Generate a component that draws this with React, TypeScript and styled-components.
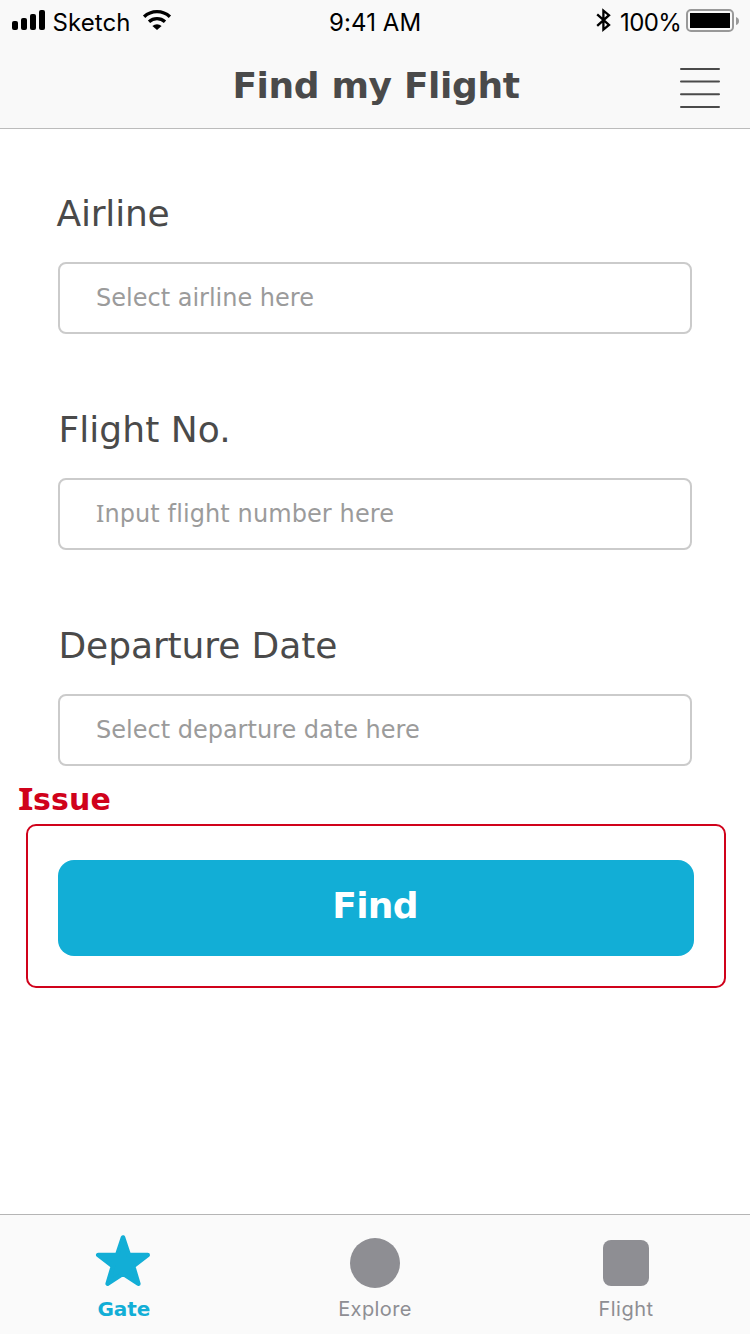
import React from 'react';
import styled, { createGlobalStyle } from 'styled-components';

const Global = createGlobalStyle`
  * { box-sizing: border-box; }
  body { margin: 0; background: #fff; }
`;

const verdana = `Verdana, 'DejaVu Sans', sans-serif`;
const system = `Inter, 'Liberation Sans', sans-serif`;

const Screen = styled.div`
  width: 750px;
  height: 1334px;
  display: flex;
  flex-direction: column;
  background: #fff;
  color: #4a4a4a;
  font-family: ${verdana};
  font-variant-ligatures: none;
  overflow: hidden;
`;

const Header = styled.header`
  height: 129px;
  background: #f9f9f9;
  border-bottom: 1px solid #bcbcbc;
`;

const StatusBar = styled.div`
  height: 40px;
  padding: 0 10px 0 12px;
  display: grid;
  grid-template-columns: 1fr auto 1fr;
  align-items: start;
  color: #000;
  font-family: ${system};
  font-size: 24px;
  line-height: 29px;
`;

const StatusGroup = styled.div<{ $end?: boolean }>`
  display: flex;
  align-items: flex-start;
  justify-content: ${(p) => (p.$end ? 'flex-end' : 'flex-start')};
`;

const StatusText = styled.span<{ $width: number; $spacing: number; $indent?: number }>`
  width: ${(p) => p.$width}px;
  padding-top: 8px;
  padding-left: ${(p) => p.$indent ?? 0}px;
  letter-spacing: ${(p) => p.$spacing}px;
  white-space: nowrap;
`;

const NavBar = styled.div`
  height: 88px;
  padding: 0 30px;
  display: grid;
  grid-template-columns: 40px 1fr 40px;
`;

const Title = styled.h1`
  grid-column: 2;
  margin: 0;
  padding: 25px 0 0 2px;
  text-align: center;
  font-size: 36px;
  line-height: 42px;
  font-weight: 700;
  letter-spacing: -0.36px;
`;

const MenuButton = styled.button`
  width: 40px;
  height: 40px;
  margin-top: 28px;
  padding: 0;
  border: 0;
  background: none;
  display: block;
  svg { display: block; }
`;

const Form = styled.main`
  flex: 1;
  padding: 64px 24px 0 26px;
`;

const Field = styled.label`
  display: block;
  height: 216px;
  padding: 0 34px 0 32px;
`;

const FieldLabel = styled.span<{ $shift: number; $spacing: number }>`
  display: block;
  height: 69px;
  margin-left: ${(p) => p.$shift}px;
  font-size: 36px;
  line-height: 42px;
  letter-spacing: ${(p) => p.$spacing}px;
`;

const FieldBox = styled.span<{ $spacing: number }>`
  display: block;
  height: 72px;
  padding: 20px 36px 0;
  border: 2px solid #cbcbcb;
  border-radius: 8px;
  color: #9b9b9b;
  font-size: 24px;
  line-height: 28px;
  letter-spacing: ${(p) => p.$spacing}px;
`;

const SerifCap = styled.span`
  font-family: 'Noto Sans', sans-serif;
  font-size: 1.02em;
  line-height: 1;
`;

const IssueTitle = styled.h2`
  margin: -59px 0 0 -8px;
  height: 42px;
  font-size: 30px;
  line-height: 35px;
  font-weight: 700;
  letter-spacing: 0.1px;
  color: #d0021b;
  ${SerifCap} {
    display: inline-block;
    transform: scaleX(1.3);
    transform-origin: left;
    margin-right: 3px;
  }
`;

const IssueFrame = styled.section`
  height: 164px;
  padding: 34px 30px;
  border: 2px solid #d0021b;
  border-radius: 10px;
`;

const FindButton = styled.button`
  display: flex;
  justify-content: center;
  align-items: flex-start;
  width: 636px;
  height: 96px;
  padding: 25px 2px 0 0;
  border: 0;
  border-radius: 16px;
  background: #12aed6;
  color: #fff;
  font: 700 36px/42px ${verdana};
  letter-spacing: -0.7px;
`;

const TabBar = styled.nav`
  height: 120px;
  display: grid;
  grid-template-columns: 246px 258px 244px;
  background: #fafafa;
  border-top: 1px solid #b5b5b5;
`;

const Tab = styled.a<{ $active?: boolean; $spacing: number }>`
  display: flex;
  flex-direction: column;
  align-items: center;
  color: ${(p) => (p.$active ? '#12aed6' : '#8e8e93')};
  font-family: ${(p) => (p.$active ? verdana : system)};
  font-weight: ${(p) => (p.$active ? 700 : 400)};
  font-size: 20px;
  line-height: 24px;
  letter-spacing: ${(p) => p.$spacing}px;
  svg { display: block; margin: 19px 0 7px; }
`;

const TabLabel = styled.span<{ $indent?: number }>`
  padding-left: ${(p) => p.$indent ?? 0}px;
`;

const Signal = () => (
  <svg width="34" height="32" viewBox="0 0 34 32">
    <rect x="0" y="21" width="6" height="9" rx="2" />
    <rect x="9" y="18" width="6" height="12" rx="2" />
    <rect x="18" y="14" width="6" height="16" rx="2" />
    <rect x="27" y="10" width="6" height="20" rx="2" />
  </svg>
);

const Wifi = () => (
  <svg width="30" height="32" viewBox="142 0 30 32">
    <g fill="none" stroke="#000" strokeWidth="3.4">
      <path d="M144.1 16.7a19 19 0 0 1 25.8 0" />
      <path d="M149 21.7a12 12 0 0 1 16 0" />
    </g>
    <path d="M152.4 25.9a7 7 0 0 1 9.2 0L157 30Z" />
  </svg>
);

const Bluetooth = () => (
  <svg width="24" height="34" viewBox="596 0 24 34">
    <path d="M597.2 14.4 609 25 603.4 29.6V10.6L609 15.2 597.2 25.8" fill="none" stroke="#000" strokeWidth="2.3" />
  </svg>
);

const Battery = () => (
  <svg width="54" height="34" viewBox="686 0 54 34">
    <rect x="687" y="10" width="46" height="21" rx="4" fill="none" stroke="#999" strokeWidth="2" />
    <rect x="690" y="13" width="40" height="15" />
    <path d="M736 17q3 1 3 4t-3 4Z" fill="#999" />
  </svg>
);

const fields = [
  { label: 'Airline', shift: -1.5, spacing: -0.2, hint: 'Select airline here', hintSpacing: 0 },
  { label: 'Flight No.', shift: 0.5, spacing: 0.05, hint: 'Input flight number here', hintSpacing: 0.1 },
  { label: 'Departure Date', shift: 0.5, spacing: -0.1, hint: 'Select departure date here', hintSpacing: 0 },
];

const Text = ({ children }: { children: string }) =>
  children.startsWith('I') ? (
    <>
      <SerifCap>I</SerifCap>
      {children.slice(1)}
    </>
  ) : (
    <>{children}</>
  );

export default function App() {
  return (
    <>
      <Global />
      <Screen>
        <Header>
          <StatusBar>
            <StatusGroup>
              <Signal />
              <StatusText $width={96} $spacing={0.1} $indent={6.5}>Sketch</StatusText>
              <Wifi />
            </StatusGroup>
            <StatusText $width={94} $spacing={0.1}>9:41 AM</StatusText>
            <StatusGroup $end>
              <Bluetooth />
              <StatusText $width={66} $spacing={-0.6}>100%</StatusText>
              <Battery />
            </StatusGroup>
          </StatusBar>
          <NavBar>
            <Title>Find my Flight</Title>
            <MenuButton aria-label="Menu">
              <svg width="40" height="40" viewBox="0 0 40 40" stroke="#4a4a4a" strokeWidth="2" strokeLinecap="round">
                <path d="M1 1H39M1 13.6H39M1 26.3H39M1 39H39" />
              </svg>
            </MenuButton>
          </NavBar>
        </Header>
        <Form>
          {fields.map((f) => (
            <Field key={f.label}>
              <FieldLabel $shift={f.shift} $spacing={f.spacing}>{f.label}</FieldLabel>
              <FieldBox $spacing={f.hintSpacing}>
                <Text>{f.hint}</Text>
              </FieldBox>
            </Field>
          ))}
          <IssueTitle><Text>Issue</Text></IssueTitle>
          <IssueFrame>
            <FindButton>Find</FindButton>
          </IssueFrame>
        </Form>
        <TabBar>
          <Tab $active $spacing={-0.1}>
            <svg width="56" height="56" viewBox="0 0 56 56" fill="currentColor" stroke="currentColor" strokeWidth="4.6" strokeLinejoin="round">
              <path d="M28 3.5 33.8 21 52.7 21 38.1 32.1 43.3 49.7 28 39.6 12.7 49.7 17.9 32.1 3.3 21 22.2 21Z" />
            </svg>
            <TabLabel $indent={1.6}>Gate</TabLabel>
          </Tab>
          <Tab $spacing={0.4}>
            <svg width="56" height="56" viewBox="0 0 56 56" fill="currentColor">
              <circle cx="28" cy="29" r="25" />
            </svg>
            <TabLabel>Explore</TabLabel>
          </Tab>
          <Tab $spacing={0.5}>
            <svg width="56" height="56" viewBox="0 0 56 56" fill="currentColor">
              <rect x="5" y="6" width="46" height="46" rx="8" />
            </svg>
            <TabLabel>Flight</TabLabel>
          </Tab>
        </TabBar>
      </Screen>
    </>
  );
}
